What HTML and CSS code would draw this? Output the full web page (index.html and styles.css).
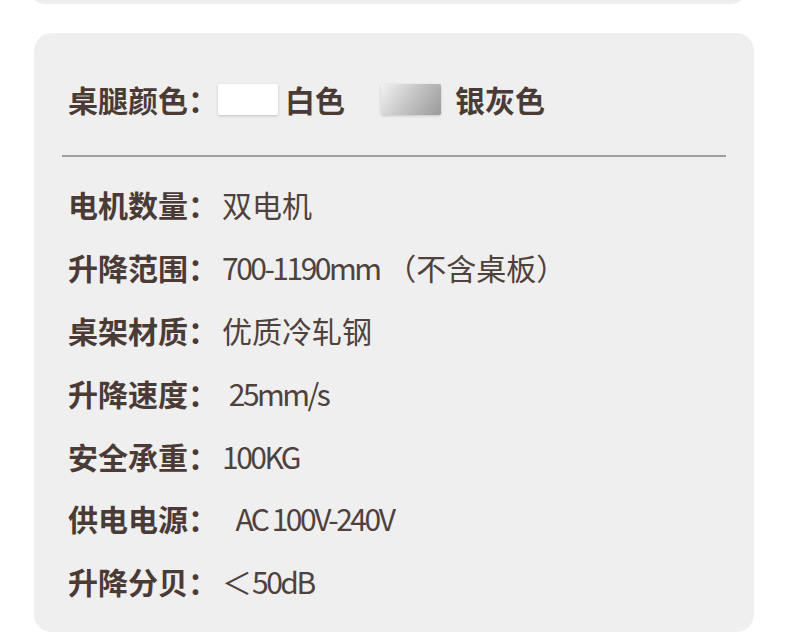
FILE: index.html
```html
<!DOCTYPE html>
<html>
<head>
  <meta charset="utf-8">
  <title>Desk Specs</title>
  <link rel="stylesheet" href="styles.css">
</head>
<body>
  <div class="prev-card"></div>

  <div class="card">
    <div class="color-row">
      <span class="label">桌腿颜色：</span>
      <span class="swatch swatch-white"></span>
      <span class="color-name">白色</span>
      <span class="swatch swatch-silver"></span>
      <span class="color-name">银灰色</span>
    </div>

    <div class="divider"></div>

    <div class="specs">
      <div class="spec">
        <span class="label">电机数量：</span>
        <span class="value">双电机</span>
      </div>
      <div class="spec">
        <span class="label">升降范围：</span>
        <span class="value"><span class="num">700-1190mm</span> （不含桌板）</span>
      </div>
      <div class="spec">
        <span class="label">桌架材质：</span>
        <span class="value">优质冷轧钢</span>
      </div>
      <div class="spec">
        <span class="label">升降速度：</span>
        <span class="value"> <span class="num">25mm/s</span></span>
      </div>
      <div class="spec">
        <span class="label">安全承重：</span>
        <span class="value"><span class="num">100KG</span></span>
      </div>
      <div class="spec">
        <span class="label">供电电源：</span>
        <span class="value">  <span class="num">AC 100V-240V</span></span>
      </div>
      <div class="spec">
        <span class="label">升降分贝：</span>
        <span class="value">＜<span class="num">50dB</span></span>
      </div>
    </div>
  </div>
</body>
</html>
```

FILE: styles.css
```css
* {
  margin: 0;
  padding: 0;
  box-sizing: border-box;
}

html, body {
  width: 100%;
  height: 100%;
  background: #FFFFFF;
  overflow: hidden;
}

body {
  font-family: "Noto Sans CJK SC", "Noto Sans", sans-serif;
  color: #4b3b36;
}

/* bottom edge of the card above, scrolled mostly out of view */
.prev-card {
  height: 22px;
  margin: -18px 39px 0 28px;
  background: #EFEFEF;
  border-radius: 0 0 18px 18px;
}

.card {
  width: 720px;
  height: 599px;
  margin: 29px 0 0 34px;
  padding: 35px 28px 0;
  background: #EFEFEF;
  border-radius: 18px;
}

.color-row {
  display: flex;
  align-items: center;
  height: 62px;
  padding-left: 6px;
}

.label {
  font-size: 30px;
  font-weight: 700;
  line-height: 1;
  white-space: pre;
}

.swatch {
  width: 60px;
  height: 31px;
  border-radius: 2px;
  box-shadow: 0 1px 3px rgba(0, 0, 0, 0.18);
}

.swatch-white {
  background: #FFFFFF;
  margin-right: 7px;
}

.swatch-silver {
  background: linear-gradient(125deg, #F2F2F2 0%, #C8C8C8 45%, #9A9A9A 100%);
  margin: 0 14px 0 36px;
}

.color-name {
  font-size: 30px;
  font-weight: 700;
  line-height: 1;
}

.divider {
  height: 2px;
  margin-top: 25px;
  background: #9E9E9E;
}

.specs {
  padding: 16px 0 0 6px;
}

.spec {
  display: flex;
  align-items: center;
  height: 62.8px;
}

.value {
  font-size: 30px;
  font-weight: 400;
  line-height: 1;
  color: #4f413c;
  margin-left: 4px;
  white-space: pre;
}

.num {
  letter-spacing: -2.5px;
}
```
